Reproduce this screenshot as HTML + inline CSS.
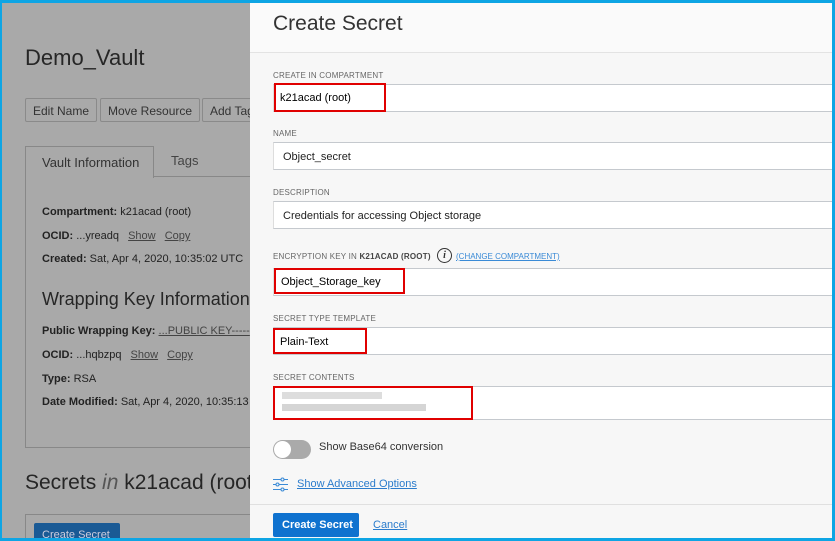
<!DOCTYPE html>
<html><head><style>
*{box-sizing:border-box;margin:0;padding:0}
html,body{width:835px;height:541px;overflow:hidden}
body{position:relative;font-family:"Liberation Sans",Arial,sans-serif;background:#aaa}
.a{position:absolute;white-space:nowrap}
.frame{position:absolute;left:0;top:0;width:835px;height:541px;border:3px solid #0ea5e4;border-left-width:2px;z-index:10;pointer-events:none}
.btn{position:absolute;top:98px;height:24px;border:1px solid #8a8a8a;border-radius:2px;font-size:12px;color:#333;padding:5px 7px;background:#a9a9a9;white-space:nowrap}
.lbl{position:absolute;left:273px;font-size:8px;color:#666;letter-spacing:.2px;white-space:nowrap}
.inp{position:absolute;left:273px;width:600px;background:#fff;border:1px solid #c5c9ce;border-left-color:#ddd;font-size:11px;color:#222;padding-left:9px}
.red{position:absolute;border:2px solid #e00000;white-space:nowrap}
.t{font-size:11px;color:#222;position:absolute;left:42px;white-space:nowrap}
.u{text-decoration:underline;color:#444;margin-left:6px}
</style></head><body>
<div class="a" style="left:0;top:0;width:250px;height:541px;background:#a9a9a9"></div>
<div class="a" style="left:25px;top:45px;font-size:22px;color:#262626">Demo_Vault</div>
<div class="btn" style="left:25px">Edit Name</div>
<div class="btn" style="left:100px">Move Resource</div>
<div class="btn" style="left:202px;width:60px">Add Tags</div>
<div class="a" style="left:25px;top:146px;width:240px;height:302px;border:1px solid #888;border-top:none"></div>
<div class="a" style="left:153px;top:176px;width:100px;border-top:1px solid #888"></div>
<div class="a" style="left:25px;top:146px;width:129px;height:32px;border:1px solid #888;border-bottom:none;background:#a9a9a9;font-size:13px;color:#333;padding:8px 0 0 16px">Vault Information</div>
<div class="a" style="left:171px;top:153px;font-size:13px;color:#444">Tags</div>
<div class="t" style="top:206px"><b>Compartment:</b> k21acad (root)</div>
<div class="t" style="top:230px"><b>OCID:</b> ...yreadq <span class="u">Show</span> <span class="u">Copy</span></div>
<div class="t" style="top:253px"><b>Created:</b> Sat, Apr 4, 2020, 10:35:02 UTC</div>
<div class="a" style="left:42px;top:289px;font-size:18px;color:#262626">Wrapping Key Information</div>
<div class="t" style="top:325px"><b>Public Wrapping Key:</b> <span class="u" style="margin:0">...PUBLIC KEY-----</span></div>
<div class="t" style="top:349px"><b>OCID:</b> ...hqbzpq <span class="u">Show</span> <span class="u">Copy</span></div>
<div class="t" style="top:373px"><b>Type:</b> RSA</div>
<div class="t" style="top:396px"><b>Date Modified:</b> Sat, Apr 4, 2020, 10:35:13</div>
<div class="a" style="left:25px;top:471px;font-size:21px;color:#262626">Secrets <i style="color:#555">in</i> k21acad (root)</div>
<div class="a" style="left:25px;top:514px;width:240px;height:40px;border:1px solid #888"></div>
<div class="a" style="left:34px;top:523px;width:86px;height:24px;background:#1a5a95;border-radius:2px;color:#ccd;font-size:11px;padding:6px 0 0 8px">Create Secret</div>

<div class="a" style="left:250px;top:0;width:590px;height:541px;background:#f7f7f7"></div>
<div class="a" style="left:250px;top:0;width:590px;height:53px;background:#fafafa;border-bottom:1px solid #e3e3e3"></div>
<div class="a" style="left:273px;top:12px;font-size:21px;color:#333">Create Secret</div>
<div class="lbl" style="top:71px">CREATE IN COMPARTMENT</div>
<div class="inp" style="top:84px;height:28px"></div>
<div class="red" style="left:274px;top:83px;width:112px;height:29px;font-size:11px;padding:7px 0 0 4px">k21acad (root)</div>
<div class="lbl" style="top:129px">NAME</div>
<div class="inp" style="top:142px;height:28px;padding-top:8px">Object_secret</div>
<div class="lbl" style="top:188px">DESCRIPTION</div>
<div class="inp" style="top:201px;height:28px;padding-top:8px">Credentials for accessing Object storage</div>
<div class="lbl" style="top:252px">ENCRYPTION KEY IN <b style="color:#444">K21ACAD (ROOT)</b></div>
<div class="a" style="left:437px;top:248px;width:15px;height:15px;border:1px solid #333;border-radius:50%;font:italic bold 10px 'Liberation Serif',serif;text-align:center;line-height:13px;color:#333">i</div>
<div class="a" style="left:456px;top:252px;font-size:8px;color:#3a8ad6;text-decoration:underline">(CHANGE COMPARTMENT)</div>
<div class="inp" style="top:268px;height:28px"></div>
<div class="red" style="left:274px;top:268px;width:131px;height:26px;font-size:11px;padding:6px 0 0 5px">Object_Storage_key</div>
<div class="lbl" style="top:314px">SECRET TYPE TEMPLATE</div>
<div class="inp" style="top:327px;height:28px"></div>
<div class="red" style="left:273px;top:328px;width:94px;height:26px;font-size:11px;padding:6px 0 0 5px">Plain-Text</div>
<div class="lbl" style="top:373px">SECRET CONTENTS</div>
<div class="inp" style="top:386px;height:34px"></div>
<div class="red" style="left:273px;top:386px;width:200px;height:34px"></div>
<div class="a" style="left:282px;top:392px;width:100px;height:7px;background:#ddd"></div>
<div class="a" style="left:282px;top:404px;width:144px;height:7px;background:#d5d5d5"></div>
<div class="a" style="left:273px;top:440px;width:38px;height:19px;border-radius:10px;background:#aaa"></div>
<div class="a" style="left:274px;top:441px;width:17px;height:17px;border-radius:50%;background:#fff"></div>
<div class="a" style="left:319px;top:441px;font-size:11px;color:#333">Show Base64 conversion</div>
<svg class="a" style="left:273px;top:477px" width="15" height="15" viewBox="0 0 15 15" fill="none" stroke="#3a8ad6" stroke-width="1"><path d="M0 2.5h8M11 2.5h4M0 7.5h3M6 7.5h9M0 12.5h8M11 12.5h4"/><circle cx="9.5" cy="2.5" r="1.5"/><circle cx="4.5" cy="7.5" r="1.5"/><circle cx="9.5" cy="12.5" r="1.5"/></svg>
<div class="a" style="left:297px;top:478px;font-size:11px;color:#2b7ccc;text-decoration:underline">Show Advanced Options</div>
<div class="a" style="left:250px;top:504px;width:590px;border-top:1px solid #e0e0e0"></div>
<div class="a" style="left:273px;top:513px;width:86px;height:24px;background:#0f72cf;border-radius:2px;color:#fff;font-size:11px;font-weight:bold;padding:6px 0 0 9px">Create Secret</div>
<div class="a" style="left:373px;top:519px;font-size:11px;color:#2b7ccc;text-decoration:underline">Cancel</div>
<div class="frame"></div>
</body></html>
